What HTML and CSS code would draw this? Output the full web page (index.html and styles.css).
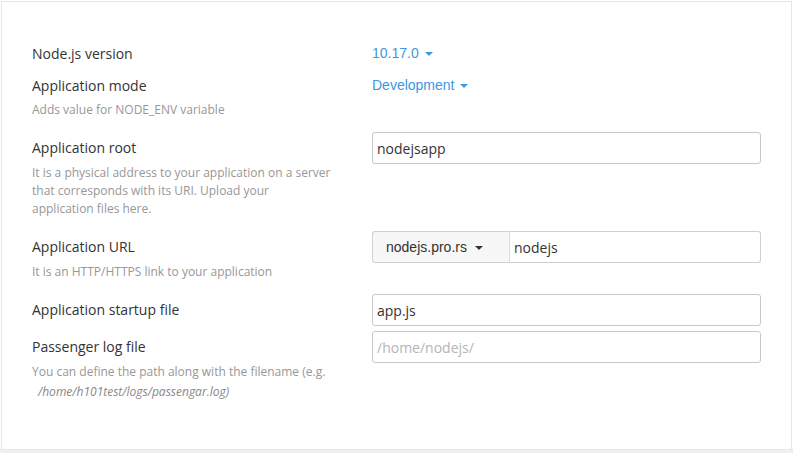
FILE: index.html
```html
<!DOCTYPE html>
<html lang="en">
<head>
<meta charset="utf-8">
<title>Node.js application</title>
<link rel="stylesheet" href="styles.css">
</head>
<body>
<div class="page">
  <section class="panel">
    <div class="form">
      <div class="row row-select">
        <div class="label-col"><div class="label">Node.js version</div></div>
        <div class="value-col"><a class="dropdown">10.17.0 <span class="caret"></span></a></div>
      </div>
      <div class="row row-select">
        <div class="label-col">
          <div class="label">Application mode</div>
          <div class="help">Adds value for NODE_ENV variable</div>
        </div>
        <div class="value-col"><a class="dropdown">Development <span class="caret"></span></a></div>
      </div>
      <div class="row">
        <div class="label-col">
          <div class="label">Application root</div>
          <div class="help">It is a physical address to your application on a server that corresponds with its URI. Upload your application files here.</div>
        </div>
        <div class="value-col"><input class="input" type="text" value="nodejsapp"></div>
      </div>
      <div class="row">
        <div class="label-col">
          <div class="label">Application URL</div>
          <div class="help">It is an HTTP/HTTPS link to your application</div>
        </div>
        <div class="value-col">
          <div class="input-group">
            <button class="addon" type="button">nodejs.pro.rs <span class="caret caret-dark"></span></button>
            <input class="input input-joined" type="text" value="nodejs">
          </div>
        </div>
      </div>
      <div class="row">
        <div class="label-col"><div class="label">Application startup file</div></div>
        <div class="value-col"><input class="input" type="text" value="app.js"></div>
      </div>
      <div class="row">
        <div class="label-col">
          <div class="label">Passenger log file</div>
          <div class="help help-wide">You can define the path along with the filename (e.g.
            <span class="path">/home/h101test/logs/passengar.log)</span></div>
        </div>
        <div class="value-col"><input class="input" type="text" placeholder="/home/nodejs/"></div>
      </div>
    </div>
  </section>
  <div class="strip"></div>
</div>
</body>
</html>
```
FILE: styles.css
```css
* { box-sizing: border-box; }

html, body {
  margin: 0;
  padding: 0;
  background: #ffffff;
}

body {
  font-family: "Open Sans", "Liberation Sans", sans-serif;
  font-size: 14px;
  color: #333333;
}

.page {
  width: 793px;
  height: 453px;
  padding: 1px 1px 0 1px;
  overflow: hidden;
}

.panel {
  border: 1px solid #e6e6e6;
  border-bottom: none;
  height: 448px;
  padding: 38px 29px 0 30px;
  background: #ffffff;
}

.strip {
  margin-left: -1px;
  margin-right: -1px;
  height: 5px;
  background: #efefef;
  border-top: 1px solid #e8e8e8;
}

.form {
  display: flex;
  flex-direction: column;
  gap: 5px;
}

.row {
  display: grid;
  grid-template-columns: 340px 389px;
  align-items: start;
}

.label {
  font-size: 14px;
  line-height: 32px;
  color: #333333;
}

.row-select .label {
  line-height: 27px;
}

.help {
  font-size: 12px;
  line-height: 18px;
  color: #979797;
  max-width: 300px;
  margin-bottom: 8px;
}

.row-select .help {
  margin-top: 2px;
}

.help-wide {
  max-width: none;
}

.path {
  display: block;
  margin-top: 2px;
  padding-left: 6px;
  font-style: italic;
  color: #888888;
}

.dropdown {
  display: inline-block;
  font-family: "Liberation Sans", Arial, sans-serif;
  font-size: 14px;
  line-height: 27px;
  color: #3a98e6;
  cursor: pointer;
}

.caret {
  display: inline-block;
  width: 0;
  height: 0;
  margin-left: 2px;
  vertical-align: middle;
  border-top: 4px solid #3a98e6;
  border-left: 4px solid transparent;
  border-right: 4px solid transparent;
}

.caret-dark {
  border-top-color: #333333;
  margin-left: 4px;
}

.input {
  display: block;
  width: 100%;
  height: 32px;
  padding: 0 4px;
  border: 1px solid #c8c8c8;
  border-radius: 3px;
  font-family: "Open Sans", sans-serif;
  font-size: 14px;
  color: #333333;
  background: #ffffff;
  outline: none;
}

.input::placeholder {
  color: #b5b5b5;
}

.input-group {
  display: flex;
}

.addon {
  flex: 0 0 137px;
  height: 32px;
  padding: 0 0 0 13px;
  text-align: left;
  border: 1px solid #d0d0d0;
  border-right: none;
  border-radius: 3px 0 0 3px;
  background: #f7f7f7;
  font-family: "Liberation Sans", Arial, sans-serif;
  font-size: 14px;
  color: #333333;
  line-height: 28px;
}

.input-joined {
  flex: 1;
  border-radius: 0 3px 3px 0;
  border-color: #d0d0d0;
  border-left: 1px solid #dcdcdc;
}
```
